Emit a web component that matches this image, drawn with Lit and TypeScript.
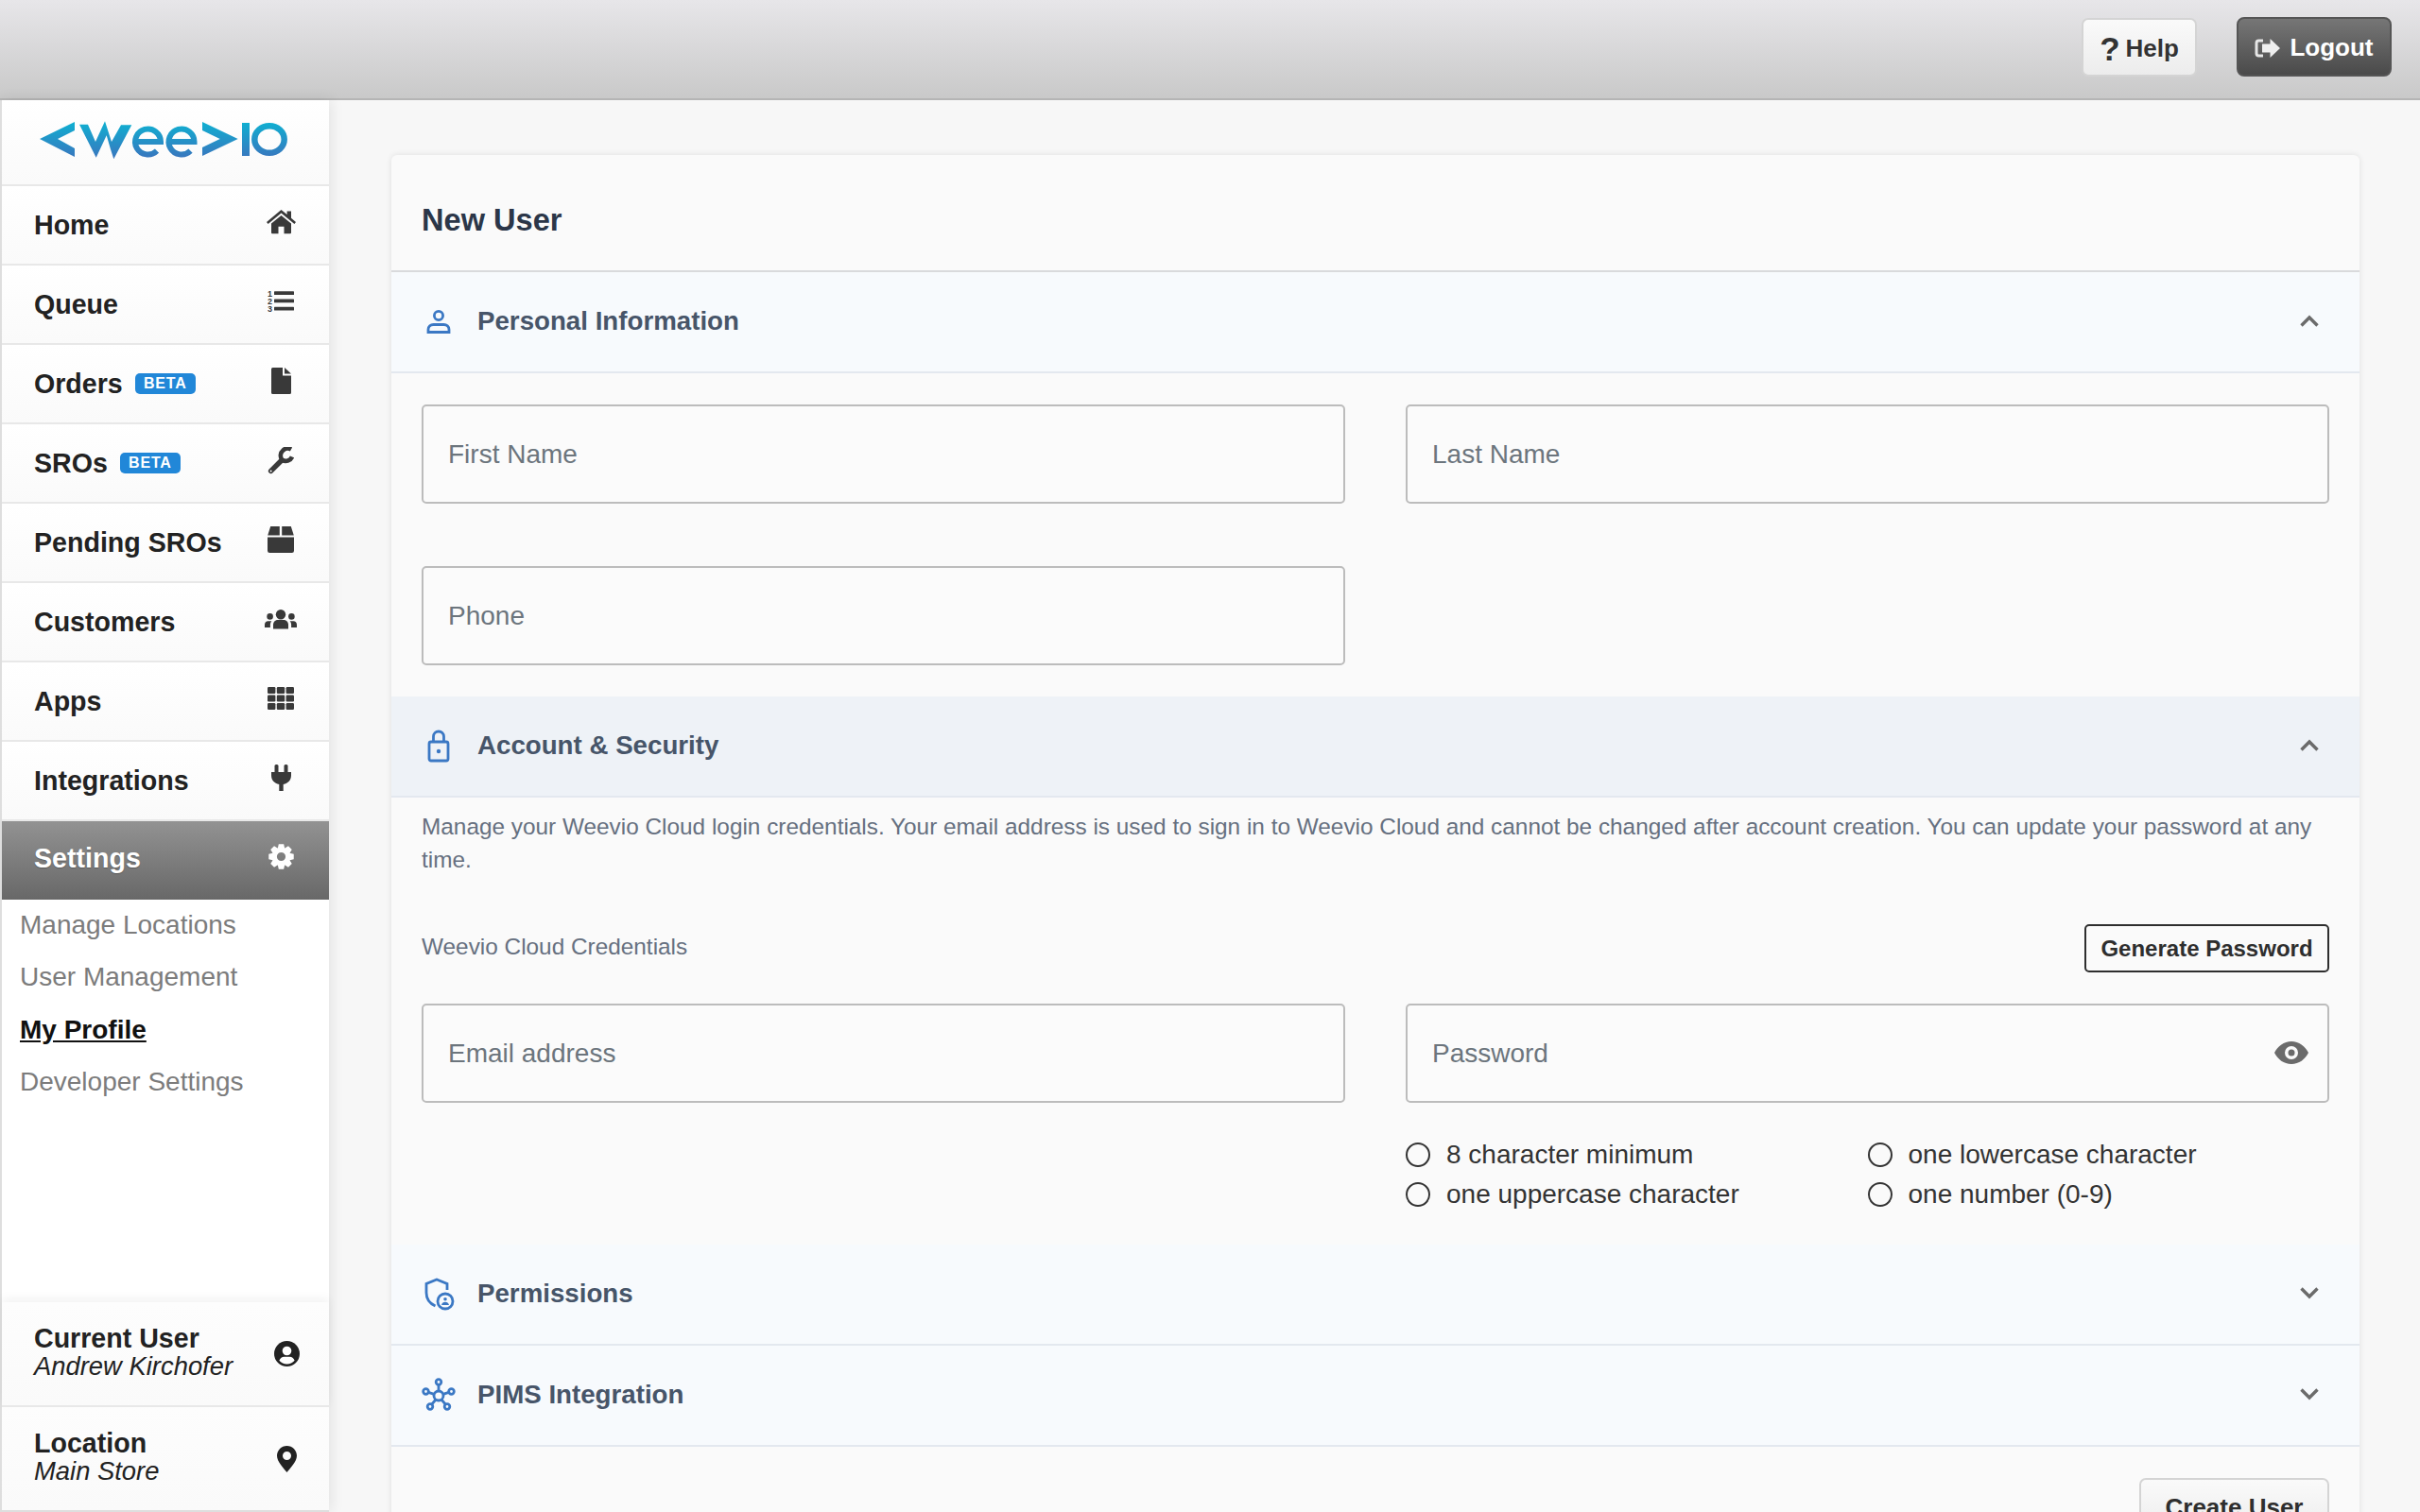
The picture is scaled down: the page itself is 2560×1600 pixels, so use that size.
import { LitElement, html, css, svg } from 'lit';
import { customElement } from 'lit/decorators.js';

// gear outline, built from teeth so the hole stays a real hole
function gearPath(): string {
  const c = 13.5;
  const pts: string[] = [];
  for (let i = 0; i < 8; i++) {
    const a = (i * Math.PI) / 4;
    const steps: [number, number][] = [[9.8, -0.38], [13.5, -0.2], [13.5, 0.2], [9.8, 0.38]];
    for (const [r, d] of steps) {
      pts.push(`${(c + r * Math.cos(a + d)).toFixed(2)} ${(c + r * Math.sin(a + d)).toFixed(2)}`);
    }
  }
  return `M${pts.join('L')}Z M${c - 4.6} ${c}a4.6 4.6 0 1 0 9.2 0a4.6 4.6 0 1 0 -9.2 0Z`;
}

const icons: Record<string, unknown> = {
  home: html`<svg width="31" height="26" viewBox="0 0 31 26" fill="currentColor"><path d="M15.5 0L0 13l1.6 2L15.5 3.6 29.4 15l1.6-2-5-4.2V1.5h-4.4v3.6z"/><path d="M15.5 6L5 14.6v9.6a1 1 0 001 1h6.5v-7.4h6v7.4H25a1 1 0 001-1v-9.6z"/></svg>`,
  queue: html`<svg width="28" height="24" viewBox="0 0 28 24" fill="currentColor"><rect x="7" y="1.200" width="21" height="3.800" rx=".6"/><rect x="7" y="9.500" width="21" height="3.800" rx=".6"/><rect x="7" y="17.800" width="21" height="3.800" rx=".6"/><text x="0" y="6.800" font-size="9" font-weight="700" font-family="Liberation Sans">1</text><text x="0" y="15" font-size="9" font-weight="700" font-family="Liberation Sans">2</text><text x="0" y="23.400" font-size="9" font-weight="700" font-family="Liberation Sans">3</text></svg>`,
  file: html`<svg width="21" height="28" viewBox="0 0 21 28" fill="currentColor"><path d="M0 1.5A1.5 1.5 0 011.5 0H12v8.5h9v18a1.5 1.5 0 01-1.5 1.5h-18A1.5 1.5 0 010 26.5z"/><path d="M14 0l7 6.5h-7z"/></svg>`,
  wrench: html`<svg width="28" height="29" viewBox="0 0 28 29" fill="none" stroke="currentColor"><path d="M3.6 25.4L15 14" stroke-width="5.4" stroke-linecap="round"/><path d="M26 10.5a7.2 7.2 0 01-10.5 3.2 7.2 7.2 0 011-10.2A7.2 7.2 0 0125 2.4" stroke-width="4.6"/><circle cx="3.6" cy="25.4" r="1" fill="#fff" stroke="none"/></svg>`,
  box: html`<svg width="28" height="28" viewBox="0 0 28 28" fill="currentColor"><path d="M3.2 0h9.6v9.6H.2zM15.2 0h9.6l3 9.6H15.2z"/><path d="M0 11.4h28v14.4a2.2 2.2 0 01-2.2 2.2H2.2A2.2 2.2 0 010 25.800z"/></svg>`,
  users: html`<svg width="34" height="21" viewBox="0 0 34 21" fill="currentColor"><circle cx="17" cy="5.200" r="5.200"/><path d="M9 20.500v-4.300c0-3.500 2.600-5.200 5-5.200h6c2.400 0 5 1.700 5 5.200v4.300z"/><circle cx="5.600" cy="7.400" r="3.300"/><circle cx="28.400" cy="7.400" r="3.300"/><path d="M0 19v-3c0-2.200 1.500-3.800 3.600-3.800h3.800c-1 1-1.500 2.500-1.500 4v2.800zM34 19v-3c0-2.200-1.500-3.800-3.600-3.800h-3.800c1 1 1.500 2.500 1.500 4v2.800z"/></svg>`,
  apps: html`<svg width="28" height="24" viewBox="0 0 28 24" fill="currentColor"><rect width="8.400" height="7" rx="1.200"/><rect x="9.800" width="8.400" height="7" rx="1.200"/><rect x="19.600" width="8.400" height="7" rx="1.200"/><rect y="8.500" width="8.400" height="7" rx="1.200"/><rect x="9.800" y="8.500" width="8.400" height="7" rx="1.200"/><rect x="19.600" y="8.500" width="8.400" height="7" rx="1.200"/><rect y="17" width="8.400" height="7" rx="1.200"/><rect x="9.800" y="17" width="8.400" height="7" rx="1.200"/><rect x="19.600" y="17" width="8.400" height="7" rx="1.200"/></svg>`,
  plug: html`<svg width="21" height="28" viewBox="0 0 21 28" fill="currentColor"><rect x="3.500" width="4" height="9" rx="1.500"/><rect x="13.500" width="4" height="9" rx="1.500"/><path d="M0 8h21v3.500c0 5-3.200 8.400-8.300 9.400V28H8.300v-7.100C3.200 19.900 0 16.500 0 11.500z"/></svg>`,
  cog: html`<svg width="27" height="27" viewBox="0 0 27 27" fill="currentColor"><path fill-rule="evenodd" d="${gearPath()}"/></svg>`,
  user: html`<svg width="27" height="27" viewBox="0 0 27 27"><circle cx="13.500" cy="13.500" r="13.500" fill="currentColor"/><circle cx="13.500" cy="10.500" r="4.800" fill="#fff"/><path d="M5.400 20.800c1-2.700 3-4 5-4h6.200c2 0 4 1.300 5 4a10.500 10.500 0 01-16.200 0z" fill="#fff"/></svg>`,
  marker: html`<svg width="21" height="28" viewBox="0 0 21 28" fill="currentColor"><path fill-rule="evenodd" d="M10.500 0C4.700 0 0 4.700 0 10.500 0 16.500 6.800 23.500 10.500 28 14.200 23.500 21 16.500 21 10.500 21 4.700 16.300 0 10.500 0zm0 6a4.500 4.500 0 110 9 4.500 4.500 0 010-9z"/></svg>`,
};

const navItems = [
  { label: 'Home', icon: 'home' },
  { label: 'Queue', icon: 'queue' },
  { label: 'Orders', icon: 'file', beta: true },
  { label: 'SROs', icon: 'wrench', beta: true },
  { label: 'Pending SROs', icon: 'box' },
  { label: 'Customers', icon: 'users' },
  { label: 'Apps', icon: 'apps' },
  { label: 'Integrations', icon: 'plug' },
];

const subItems = ['Manage Locations', 'User Management', 'My Profile', 'Developer Settings'];

const sectionIcons: Record<string, unknown> = {
  person: svg`<circle cx="18" cy="12" r="4.600"/><path d="M7 29.500v-2.800c0-3.200 2.600-5.200 5.500-5.200h11c2.900 0 5.500 2 5.500 5.200v2.800z"/>`,
  lock: svg`<rect x="8" y="14" width="20" height="20" rx="2"/><path d="M12.500 14V8.500a5.500 5.500 0 0111 0V14"/><circle cx="18" cy="24" r="2.200" fill="currentColor" stroke="none"/>`,
  shield: svg`<path d="M14.500 31C9 28.500 5 24 5 17V7.500L16 3l11 4.500V14"/><circle cx="25" cy="26" r="8"/><circle cx="25" cy="23.800" r="1.800" fill="currentColor" stroke="none"/><path d="M21 30c.6-2.300 2-3.200 4-3.200s3.400.9 4 3.200z" fill="currentColor" stroke="none"/>`,
  network: svg`<circle cx="18" cy="19" r="5"/><circle cx="18" cy="4.500" r="2.800"/><circle cx="4.500" cy="14.500" r="2.800"/><circle cx="31.500" cy="14.500" r="2.800"/><circle cx="9" cy="30.500" r="2.800"/><circle cx="27" cy="30.500" r="2.800"/><path d="M18 7.500V14M7.200 15.400L13.300 17.400M28.800 15.400L22.700 17.400M10.700 28.200L15 23M25.300 28.200L21 23"/>`,
};

@customElement('app-root')
export class AppRoot extends LitElement {
  static styles = css`
    :host {
      display: flex;
      flex-direction: column;
      height: 100vh;
      overflow: hidden;
      background: #f7f7f7;
      font-family: 'Liberation Sans', Arial, sans-serif;
      color: #222;
    }
    * { box-sizing: border-box; }

    .topbar {
      flex: none;
      height: 106px;
      display: flex;
      justify-content: flex-end;
      align-items: flex-start;
      gap: 42px;
      padding: 18px 30px 0 0;
      background: linear-gradient(#e7e6e9, #c9c9c9);
      border-bottom: 2px solid #b5b5b5;
    }
    .btn {
      display: flex;
      align-items: center;
      justify-content: center;
      font: 700 26px 'Liberation Sans', Arial, sans-serif;
    }
    .help {
      width: 122px;
      height: 62px;
      margin-top: 1px;
      padding-top: 2px;
      gap: 6px;
      color: #333;
      border: 2px solid #d4d4d4;
      border-radius: 7px;
      background: linear-gradient(#fafafa, #ececec);
      text-shadow: 0 1px 0 #fff;
    }
    .help .q { font-size: 35px; line-height: 1; }
    .logout {
      width: 164px;
      height: 63px;
      padding-top: 2px;
      gap: 10px;
      color: #fff;
      border: 2px solid #555;
      border-radius: 8px;
      background: linear-gradient(#767676, #4a4a4a);
    }

    .body { flex: 1; display: flex; min-height: 0; }

    .side {
      flex: none;
      width: 348px;
      display: flex;
      flex-direction: column;
      background: #fff;
      border-left: 2px solid #dedede;
      box-shadow: 2px 0 14px rgba(0, 0, 0, 0.09);
      position: relative;
    }
    .logo {
      flex: none;
      height: 91px;
      display: flex;
      align-items: center;
      justify-content: center;
      padding: 0 4px 6px 0;
      background: linear-gradient(#fff, #fafafa);
      border-bottom: 2px solid #e8e8e8;
    }
    .nav {
      height: 84px;
      flex: none;
      display: flex;
      align-items: center;
      justify-content: space-between;
      padding: 0 31px 0 34px;
      font-size: 28.600px;
      font-weight: 700;
      color: #222;
      background: linear-gradient(#fff, #fafafa);
      border-bottom: 2px solid #e8e8e8;
    }
    .nav .ic {
      width: 40px;
      display: flex;
      justify-content: center;
      margin-bottom: 6px;
      color: #393939;
    }
    .nav .lab { display: flex; align-items: center; gap: 13px; }
    .beta {
      width: 64px;
      height: 22px;
      display: flex;
      align-items: center;
      justify-content: center;
      border-radius: 5px;
      background: #2187d8;
      color: #fff;
      font-size: 16px;
      letter-spacing: 0.8px;
    }
    .nav.active {
      height: 83px;
      padding-bottom: 5px;
      color: #fff;
      border-bottom: none;
      background: linear-gradient(#929292, #686868);
      text-shadow: 0 1px 1px rgba(0, 0, 0, 0.25);
    }
    .nav.active .ic { color: #fff; margin-bottom: 3px; }
    .sub { flex: 1; padding-left: 19px; margin-top: -1px; }
    .sub div {
      height: 55.500px;
      display: flex;
      align-items: center;
      font-size: 28px;
      color: #7c7c7c;
    }
    .sub div.cur { color: #111; font-weight: 700; text-decoration: underline; }
    .foot {
      flex: none;
      height: 111px;
      display: flex;
      align-items: center;
      justify-content: space-between;
      padding: 0 31px 4px 34px;
      background: linear-gradient(#fdfdfd, #fafafa);
      border-bottom: 2px solid #e8e8e8;
      line-height: 29px;
    }
    .foot.first { box-shadow: 0 -4px 10px rgba(0, 0, 0, 0.05); }
    .foot.last { padding-bottom: 3px; border-bottom-color: #dedede; }
    .foot b { display: block; font-size: 28.600px; }
    .foot i { display: block; font-size: 27.400px; }
    .foot .ic { display: flex; color: #222; margin-top: 4px; }

    .main {
      flex: 1;
      min-width: 0;
      padding: 58px 64px 0 66px;
    }
    .card {
      background: #fafafa;
      border-radius: 6px 6px 0 0;
      box-shadow: 0 0 6px rgba(0, 0, 0, 0.1);
      height: 2000px;
    }
    .title {
      height: 124px;
      display: flex;
      align-items: center;
      padding: 15px 0 0 32px;
      font-size: 32.600px;
      font-weight: 700;
      color: #2b3648;
      border-bottom: 2px solid #d9dadc;
    }
    .sec {
      height: 107px;
      display: flex;
      align-items: center;
      padding: 0 43px 2px 32px;
      background: #f7fafd;
      border-bottom: 2px solid #e3e8ef;
      font-size: 27.700px;
      font-weight: 700;
      color: #475569;
    }
    .sec.active { background: #eef2f7; }
    .sec svg.ic {
      width: 36px;
      height: 36px;
      margin-right: 23px;
      color: #3b78c4;
      fill: none;
      stroke: currentColor;
      stroke-width: 2.800;
    }
    .sec .t { flex: 1; }
    .chev { width: 20px; height: 13px; fill: none; stroke: #6b6b6b; stroke-width: 3.400; }

    .pad { padding: 33px 32px; }
    .grid {
      display: grid;
      grid-template-columns: 1fr 1fr;
      column-gap: 64px;
      row-gap: 66px;
    }
    input {
      display: block;
      width: 100%;
      height: 105px;
      padding: 0 26px;
      border: 2px solid #bcbcbc;
      border-radius: 5px;
      background: #fbfbfb;
      font: 28px 'Liberation Sans', Arial, sans-serif;
      color: #333;
      outline: none;
    }
    input::placeholder { color: #6c757d; opacity: 1; }

    .acct { padding: 14px 32px 40px; }
    .desc {
      margin: 0;
      font-size: 24.360px;
      line-height: 34.500px;
      color: #667080;
    }
    .cred {
      display: flex;
      align-items: center;
      justify-content: space-between;
      margin: 51px 0 33px;
      font-size: 24.360px;
      color: #667080;
    }
    .cred span { margin-bottom: 3px; }
    .gen {
      width: 259px;
      height: 51px;
      display: flex;
      align-items: center;
      justify-content: center;
      border: 2px solid #2e2e2e;
      border-radius: 5px;
      font-size: 24px;
      font-weight: 700;
      color: #2e2e2e;
    }
    .pw { position: relative; }
    .eye { position: absolute; right: 22px; top: 40px; }
    .reqs {
      display: grid;
      grid-template-columns: 1fr 1fr;
      row-gap: 16px;
      margin-top: 42px;
    }
    .req {
      display: flex;
      align-items: center;
      gap: 17px;
      height: 26px;
      font-size: 28px;
      color: #333;
    }
    .req span {
      width: 26px;
      height: 26px;
      border: 2.500px solid #333;
      border-radius: 50%;
    }
    .foot-actions { display: flex; justify-content: flex-end; padding: 33px 32px 0; }
    .create {
      width: 201px;
      height: 62px;
      color: #2e2e2e;
      border: 2px solid #d4d4d4;
      border-radius: 7px;
      background: linear-gradient(#fafafa, #ececec);
    }
  `;

  private section(name: string, icon: string, open: boolean, active = false) {
    return html`
      <div class="sec ${active ? 'active' : ''}">
        <svg class="ic" viewBox="0 0 36 36">${sectionIcons[icon]}</svg>
        <div class="t">${name}</div>
        <svg class="chev" viewBox="0 0 20 13">
          <path d=${open ? 'M1.500 11.500L10 3l8.500 8.500' : 'M1.500 1.500L10 10l8.500-8.500'} />
        </svg>
      </div>
    `;
  }

  render() {
    return html`
      <div class="topbar">
        <div class="btn help"><span class="q">?</span><span>Help</span></div>
        <div class="btn logout">
          <svg width="27" height="20" viewBox="0 0 27 20">
            <path d="M9 2H4.500A2.500 2.500 0 002 4.500v11A2.500 2.500 0 004.500 18H9" fill="none" stroke="#e6e6e6" stroke-width="3"/>
            <path d="M16.500 0L27 10 16.500 20v-5.500H8v-9h8.500z" fill="#eee"/>
          </svg>
          <span>Logout</span>
        </div>
      </div>
      <div class="body">
        <div class="side">
          <div class="logo">
            <svg width="263" height="42" viewBox="0 0 263 42">
              <defs>
                <linearGradient id="lg" gradientUnits="userSpaceOnUse" x1="0" y1="0" x2="0" y2="42">
                  <stop offset="0" stop-color="#0db3d2" />
                  <stop offset="1" stop-color="#3b74bd" />
                </linearGradient>
              </defs>
              <g fill="url(#lg)">
                <polygon points="0,20 37,2 37,11 19,20 37,30 37,39" />
                <polygon points="42,4.700 51,4.700 59,23 69,1.300 76,23 86,5.300 97.300,5.300 78.300,41.300 75,31 70.700,16.300 59.700,39.700" />
                <polygon points="172,2 209.700,20 172,38 172,29 190.700,20 172,11" />
                <rect x="214" y="3" width="8" height="35" />
              </g>
              <g fill="none" stroke="url(#lg)" stroke-width="6">
                <path d="M101 23H128A13.500 13.500 0 1 0 124 32.600" />
                <path d="M136.500 23H163.500A13.500 13.500 0 1 0 159.500 32.600" />
                <ellipse cx="243" cy="20.500" rx="15.700" ry="14.300" stroke-width="6.500" />
              </g>
            </svg>
          </div>
          ${navItems.map(
            (n) => html`
              <div class="nav">
                <div class="lab">${n.label}${n.beta ? html`<span class="beta">BETA</span>` : ''}</div>
                <div class="ic">${icons[n.icon]}</div>
              </div>
            `
          )}
          <div class="nav active">
            <div class="lab">Settings</div>
            <div class="ic">${icons.cog}</div>
          </div>
          <div class="sub">
            ${subItems.map((s) => html`<div class=${s === 'My Profile' ? 'cur' : ''}>${s}</div>`)}
          </div>
          <div class="foot first">
            <div><b>Current User</b><i>Andrew Kirchofer</i></div>
            <div class="ic">${icons.user}</div>
          </div>
          <div class="foot last">
            <div><b>Location</b><i>Main Store</i></div>
            <div class="ic" style="margin-right:3px">${icons.marker}</div>
          </div>
        </div>
        <div class="main">
          <div class="card">
            <div class="title">New User</div>
            ${this.section('Personal Information', 'person', true)}
            <div class="pad grid">
              <input placeholder="First Name" />
              <input placeholder="Last Name" />
              <input placeholder="Phone" />
            </div>
            ${this.section('Account & Security', 'lock', true, true)}
            <div class="acct">
              <p class="desc">
                Manage your Weevio Cloud login credentials. Your email address is used to sign in to Weevio Cloud and
                cannot be changed after account creation. You can update your password at any time.
              </p>
              <div class="cred">
                <span>Weevio Cloud Credentials</span>
                <div class="gen">Generate Password</div>
              </div>
              <div class="grid">
                <input placeholder="Email address" />
                <div>
                  <div class="pw">
                    <input placeholder="Password" />
                    <svg class="eye" width="36" height="24" viewBox="0 0 36 24" fill="#6b6b6b">
                      <path fill-rule="evenodd" d="M18 0C10 0 3.500 5 0 12c3.500 7 10 12 18 12s14.500-5 18-12C32.500 5 26 0 18 0zm0 5a7 7 0 110 14 7 7 0 010-14z"/>
                      <circle cx="18" cy="12" r="3.500" />
                    </svg>
                  </div>
                  <div class="reqs">
                    <div class="req"><span></span>8 character minimum</div>
                    <div class="req"><span></span>one lowercase character</div>
                    <div class="req"><span></span>one uppercase character</div>
                    <div class="req"><span></span>one number (0-9)</div>
                  </div>
                </div>
              </div>
            </div>
            ${this.section('Permissions', 'shield', false)}
            ${this.section('PIMS Integration', 'network', false)}
            <div class="foot-actions">
              <div class="btn create">Create User</div>
            </div>
          </div>
        </div>
      </div>
    `;
  }
}
